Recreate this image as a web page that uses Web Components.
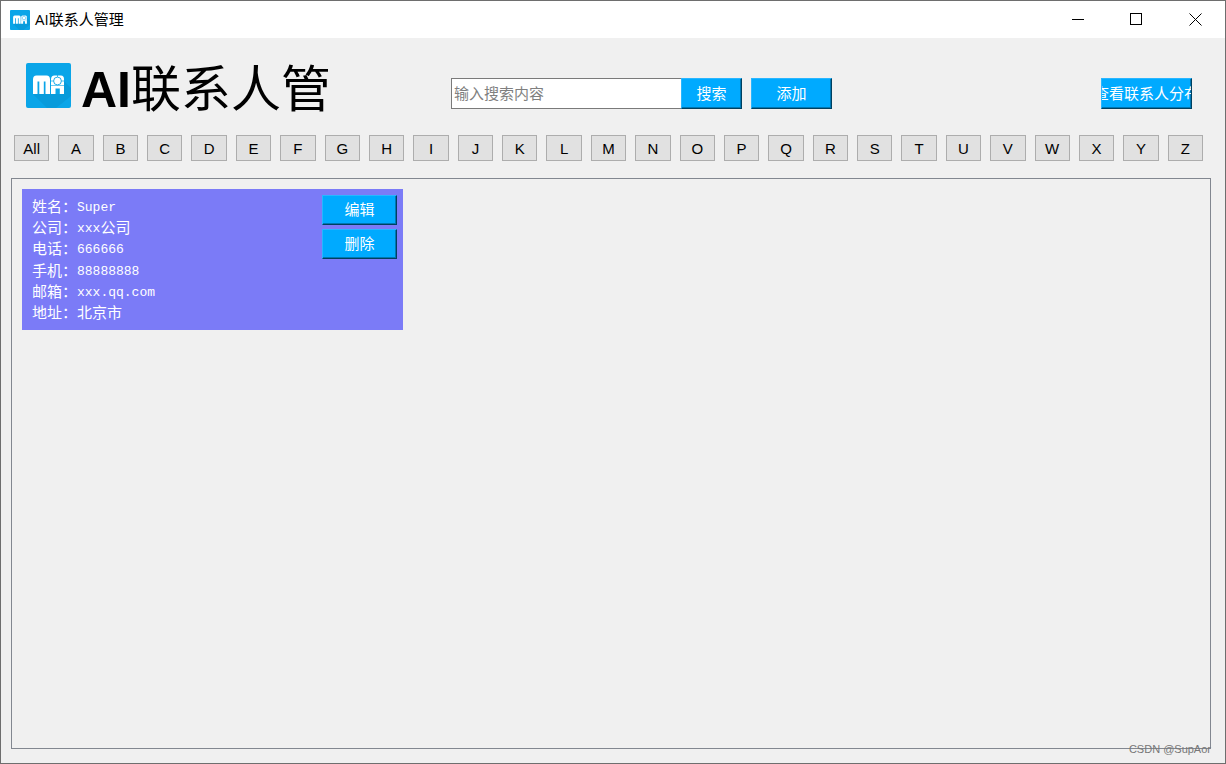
<!DOCTYPE html>
<html lang="zh-CN">
<head>
<meta charset="utf-8">
<title>AI联系人管理</title>
<style>
html,body{margin:0;height:100%}
body{font:15px/20px "Liberation Sans","Noto Sans CJK SC",sans-serif;color:#000;background:#f0f0f0}
</style>
</head>
<body>
<contacts-window></contacts-window>

<template id="t-logo">
<style>:host{display:block;width:45px;height:45px;flex:none}svg{display:block;width:100%;height:100%}</style>
<svg viewBox="0 0 45 45" aria-hidden="true">
<rect width="45" height="45" rx="2" fill="#0aa5e8"/>
<path d="M7 31L21 45H30L45 33V25L38 18V31Z" fill="#089bdb"/>
<path d="M7 31V16.500Q7 12.500 10.500 12.500H20.500Q24 12.500 24 16.500V31H19.500V18.500H17.800V31H13.300V18.500H11.500V31Z" fill="#fff"/>
<path d="M25 31V16.500Q25 12.500 28.500 12.500H35Q38 12.500 38 16V31H33.800V25.500H29.500V31Z" fill="#fff"/>
<path d="M25 22.500H38" stroke="#0aa5e8" stroke-width=".6"/>
<circle cx="31.500" cy="18" r="3.900" fill="#fff" stroke="#0aa5e8" stroke-width=".9"/>
<path d="M31.500 12V14M25 18H27.500M35.500 18H38" stroke="#0aa5e8" stroke-width=".7"/>
</svg>
</template>

<template id="t-button">
<style>
:host{display:block;height:31px}
button{box-sizing:border-box;width:100%;height:100%;margin:0;padding:0;display:flex;justify-content:center;align-items:center;overflow:hidden;white-space:nowrap;font:15px/20px "Liberation Sans","Noto Sans CJK SC",sans-serif;color:#fff;background:#00aaff;border:1px solid;border-color:#29b6ff #00405f #00405f #29b6ff;box-shadow:inset -1px -1px #0077b3}
span{flex:none}
</style>
<button type="button"><span><slot></slot></span></button>
</template>

<template id="t-titlebar">
<style>
:host{display:flex;align-items:center;height:37px;padding-left:9px;background:#fff}
app-logo{width:20px;height:20px}
span{flex:1;margin-left:5px;padding-bottom:2px;font-family:"Open Sans","Noto Sans CJK SC",sans-serif}
button{width:58px;height:37px;padding:0;border:0;background:none;display:flex;align-items:center;justify-content:center}
button:last-child{width:60px}
svg{width:13px;height:13px;fill:none;stroke:#000}
</style>
<app-logo></app-logo><span><slot></slot></span>
<button aria-label="最小化"><svg viewBox="0 0 13 13"><path d="M0 6.500H12"/></svg></button>
<button aria-label="最大化"><svg viewBox="0 0 13 13"><rect x=".5" y=".5" width="11" height="11"/></svg></button>
<button aria-label="关闭"><svg viewBox="0 0 13 13"><path d="M.5 .5L12.500 12.500M12.500 .5L.5 12.500"/></svg></button>
</template>

<template id="t-search">
<style>
:host{display:flex;height:31px}
input{box-sizing:border-box;width:230px;height:31px;margin:0;padding:0 2px;border:1px solid #7a7a7a;border-right:0;border-radius:0;background:#fff;font:15px/20px "Liberation Sans","Noto Sans CJK SC",sans-serif;outline:0}
input::placeholder{color:#7f7f7f;opacity:1}
.go{width:61px}.add{width:81px;margin-left:9px}
</style>
<input type="search" aria-label="搜索" placeholder="输入搜索内容"><blue-button class="go">搜索</blue-button><blue-button class="add">添加</blue-button>
</template>

<template id="t-header">
<style>
:host{display:flex;align-items:flex-start;padding:25px 33px 0 25px}
h1{margin:0 0 0 10px;width:250px;font-size:50px;line-height:54px;height:54px;white-space:nowrap}
h1 span{font-weight:400}
contact-search{margin-left:120px;margin-top:15px}
.view{width:91px;margin-left:auto;margin-top:15px}
</style>
<app-logo></app-logo><h1>AI<span>联系人管</span></h1>
<contact-search></contact-search>
<blue-button class="view">查看联系人分布</blue-button>
</template>

<template id="t-letters">
<style>
:host{display:grid;grid-template-columns:repeat(27,1fr);gap:9px;padding:0 22px 0 13px}
button{box-sizing:border-box;min-width:0;height:26px;margin:0;padding:2px 0 0;border:1px solid #adadad;background:#e1e1e1;color:#000;font:15px/20px "Liberation Sans",sans-serif}
</style>
</template>

<template id="t-card">
<style>
:host{display:flex;box-sizing:border-box;width:381px;height:141px;padding:6px 6px 6px 10px;background:#7b7bf7;color:#fff}
dl{flex:1;margin:0;padding-top:1px;display:grid;grid-template-rows:repeat(6,minmax(0,1fr))}
div{display:flex;align-items:center}
dt{width:45px}dd{margin:0;display:flex;align-items:center}
b{padding-top:2px;font:13px/20px "Liberation Mono",monospace}
nav{width:75px;display:grid;gap:4px;align-content:start}
blue-button{height:30px}
</style>
<dl>
<div><dt>姓名：</dt><dd><b>Super</b></dd></div>
<div><dt>公司：</dt><dd><b>xxx</b>公司</dd></div>
<div><dt>电话：</dt><dd><b>666666</b></dd></div>
<div><dt>手机：</dt><dd><b>88888888</b></dd></div>
<div><dt>邮箱：</dt><dd><b>xxx.qq.com</b></dd></div>
<div><dt>地址：</dt><dd>北京市</dd></div>
</dl>
<nav><blue-button>编辑</blue-button><blue-button>删除</blue-button></nav>
</template>

<template id="t-window">
<style>
:host{display:flex;flex-direction:column;box-sizing:border-box;min-height:100vh;position:relative;border:1px solid #6e6e6e;background:#f0f0f0}
letter-bar{margin-top:18px}
main{flex:1;margin:17px 14px 14px 10px;padding:10px;border:1px solid #828790}
small{position:absolute;right:14px;bottom:6px;font-size:11px;line-height:16px;color:#777}
</style>
<title-bar>AI联系人管理</title-bar>
<app-header></app-header>
<letter-bar></letter-bar>
<main><contact-card></contact-card></main>
<small>CSDN @SupAor</small>
</template>

<script>
class Base extends HTMLElement{
  constructor(){
    super();
    this.attachShadow({mode:'open'}).append(document.getElementById(this.constructor.template).content.cloneNode(true));
  }
}
const define=(name,id)=>customElements.define(name,class extends Base{static template=id});
define('app-logo','t-logo');
define('blue-button','t-button');
define('title-bar','t-titlebar');
define('contact-search','t-search');
define('app-header','t-header');
define('contact-card','t-card');
customElements.define('letter-bar',class extends Base{
  static template='t-letters';
  constructor(){
    super();
    for(const label of ['All',...'ABCDEFGHIJKLMNOPQRSTUVWXYZ']){
      const b=document.createElement('button');
      b.type='button';b.textContent=label;
      this.shadowRoot.append(b);
    }
  }
});
define('contacts-window','t-window');
</script>
</body>
</html>
